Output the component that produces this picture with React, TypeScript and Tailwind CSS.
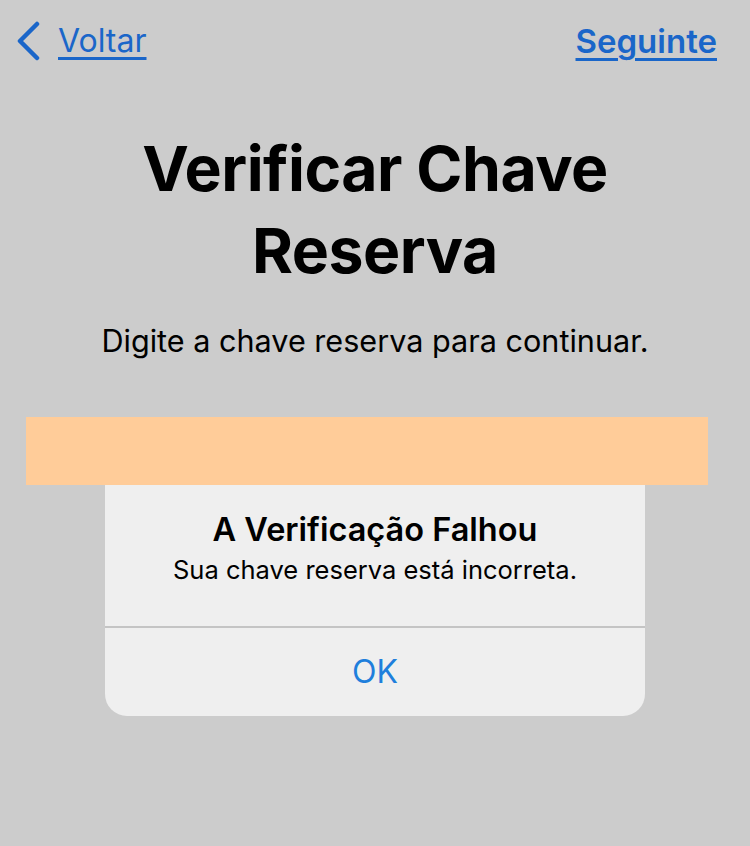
import * as React from "react";

function BackChevron() {
  return (
    <svg width="26" height="40" viewBox="0 0 26 40" fill="none" className="shrink-0">
      <path d="M22 3 L5 20 L22 37" stroke="#1a66c9" strokeWidth="4.5" strokeLinecap="round" strokeLinejoin="round" />
    </svg>
  );
}

export default function App() {
  return (
    <div
      className="relative h-[846px] w-[750px] overflow-hidden bg-[#cccccc] text-black"
      style={{ fontFamily: "Inter, 'Noto Sans', sans-serif" }}
    >
      {/* nav bar */}
      <div className="flex items-center justify-between pl-[15px] pr-[33px] pt-[21px]">
        <div className="flex items-center gap-[17px]">
          <BackChevron />
          <span className="text-[32px] leading-[38px] text-[#1a66c9] underline decoration-[3px] underline-offset-[5px]">
            Voltar
          </span>
        </div>
        <span className="text-[33px] font-semibold leading-[38px] text-[#1a66c9] underline decoration-[3px] underline-offset-[5px]">
          Seguinte
        </span>
      </div>

      {/* heading */}
      <h1 className="mt-[66px] text-center text-[62.5px] font-bold leading-[82px] tracking-[-0.5px]">
        Verificar Chave
        <br />
        Reserva
      </h1>
      <p className="mt-[30px] text-center text-[30.6px] leading-[40px]">
        Digite a chave reserva para continuar.
      </p>

      {/* key field area + alert */}
      <div className="relative mt-[56px]">
        <div className="relative z-10 ml-[26px] h-[68px] w-[682px] bg-[#ffcc99]" />
        <div className="absolute left-[105px] top-[37px] w-[540px] overflow-hidden rounded-[22px] bg-[#efefef]">
          <div className="flex h-[172px] flex-col items-center justify-end pb-[40px]">
            <div className="text-[32.5px] font-semibold leading-[40px]">A Verificação Falhou</div>
            <div className="mt-[4px] text-[25.5px] leading-[32px]">Sua chave reserva está incorreta.</div>
          </div>
          <div className="h-[2px] bg-[#c4c4c4]" />
          <div className="flex h-[88px] items-center justify-center text-[32px] text-[#1f7fdc]">OK</div>
        </div>
      </div>
    </div>
  );
}
